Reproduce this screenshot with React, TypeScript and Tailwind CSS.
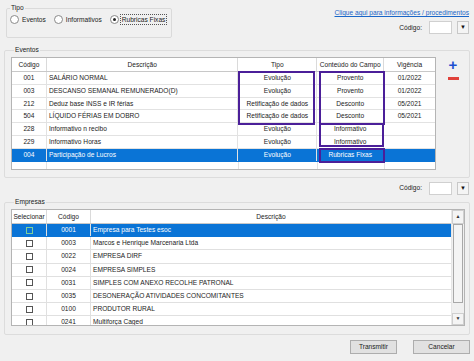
import React from "react";

const eventos = [
  { cod: "001", desc: "SALÁRIO NORMAL", tipo: "Evolução", cont: "Provento", vig: "01/2022" },
  { cod: "003", desc: "DESCANSO SEMANAL REMUNERADO(D)", tipo: "Evolução", cont: "Provento", vig: "01/2022" },
  { cod: "212", desc: "Deduz base INSS e IR férias", tipo: "Retificação de dados", cont: "Desconto", vig: "05/2021" },
  { cod: "504", desc: "LÍQUIDO FÉRIAS EM DOBRO", tipo: "Retificação de dados", cont: "Desconto", vig: "05/2021" },
  { cod: "228", desc: "Informativo n recibo", tipo: "Evolução", cont: "Informativo", vig: "" },
  { cod: "229", desc: "Informativo Horas", tipo: "Evolução", cont: "Informativo", vig: "" },
  { cod: "004", desc: "Participação de Lucros", tipo: "Evolução", cont: "Rubricas Fixas", vig: "", sel: true },
];

const empresas = [
  { cod: "0001", desc: "Empresa para Testes esoc", sel: true },
  { cod: "0003", desc: "Marcos e Henrique Marcenaria Ltda" },
  { cod: "0022", desc: "EMPRESA DIRF" },
  { cod: "0024", desc: "EMPRESA SIMPLES" },
  { cod: "0031", desc: "SIMPLES COM ANEXO RECOLHE PATRONAL" },
  { cod: "0035", desc: "DESONERAÇÃO ATIVIDADES CONCOMITANTES" },
  { cod: "0100", desc: "PRODUTOR RURAL" },
  { cod: "0241", desc: "Multiforça Caged" },
];

const Radio = ({ label, checked, focus }: { label: string; checked?: boolean; focus?: boolean }) => (
  <div className="flex items-center gap-[1px] whitespace-nowrap">
    <div className="w-[9px] h-[9px] rounded-full border border-[#8a8a8a] bg-white flex items-center justify-center">
      {checked && <div className="w-[3px] h-[3px] rounded-full bg-[#222]" />}
    </div>
    <span className={focus ? "border border-dotted border-[#555] px-[1px] leading-[9px]" : "px-[1px] leading-[9px] border border-transparent"}>
      {label}
    </span>
  </div>
);

const Combo = () => (
  <div className="flex items-center gap-[2px]">
    <span className="mr-[5px]">Código:</span>
    <div className="w-[23px] h-[13px] bg-white border border-[#d0d0d0]" />
    <div className="w-[12px] h-[13px] ml-[3px] bg-[#f4f4f4] border border-[#c8c8c8] flex items-center justify-center text-[6px] text-[#111]">
      ▼
    </div>
  </div>
);

const Box = ({ className }: { className: string }) => (
  <div className={"absolute border-2 border-[#4b1f99] pointer-events-none " + className} />
);

export default function App() {
  return (
    <div
      className="w-[474px] h-[361px] bg-[#f0f0f0] flex flex-col px-[4px] text-[6.6px] text-[#1b1b1b] overflow-hidden"
      style={{ fontFamily: '"Liberation Sans", Arial, sans-serif' }}
    >
      {/* topo */}
      <div className="h-[46px] flex">
        <fieldset className="ml-[2px] mt-[4px] w-[164px] h-[34px] border border-[#dadada] rounded-[2px] px-[4px]">
          <legend className="px-[1px] -ml-[1px] leading-[8px]">Tipo</legend>
          <div className="flex items-center gap-[6px] mt-[2px] -ml-[1px]">
            <Radio label="Eventos" />
            <Radio label="Informativos" />
            <Radio label="Rubricas Fixas" checked focus />
          </div>
        </fieldset>
        <div className="flex-1 flex flex-col items-end pr-[1px]">
          <a className="mt-[9px] text-[#1a66c8] underline leading-[8px]">Clique aqui para informações / procedimentos</a>
          <div className="mt-[4px]">
            <Combo />
          </div>
        </div>
      </div>

      {/* eventos */}
      <fieldset className="h-[132px] border border-[#dcdcdc] rounded-[2px] pl-[6px] pr-[6px]">
        <legend className="px-[1px] ml-[3px] leading-[8px]">Eventos</legend>
        <div className="flex mt-[3px]">
          <div className="relative w-[425px] h-[113px] bg-white border border-[#b4b4b4] overflow-hidden">
            <div className="flex h-[14px] border-b border-[#c8c8c8] items-center">
              <div className="w-[35px] text-center border-r border-[#dadada] h-full leading-[14px]">Código</div>
              <div className="w-[192px] text-center border-r border-[#dadada] h-full leading-[14px]">Descrição</div>
              <div className="w-[79px] text-center border-r border-[#dadada] h-full leading-[14px]">Tipo</div>
              <div className="w-[67px] text-center border-r border-[#dadada] h-full leading-[14px]">Conteúdo do Campo</div>
              <div className="w-[51px] text-center h-full leading-[14px]">Vigência</div>
            </div>
            {eventos.map((e) => (
              <div
                key={e.cod}
                className={
                  "flex h-[12.8px] leading-[12px] border-b " +
                  (e.sel ? "bg-[#0a74d6] text-white border-[#0a74d6]" : "border-[#e2e2e2]")
                }
              >
                <div className="w-[35px] text-center border-r border-[#e2e2e2]">{e.cod}</div>
                <div className="w-[192px] pl-[2px] border-r border-[#e2e2e2] whitespace-nowrap">{e.desc}</div>
                <div className="w-[79px] text-center border-r border-[#e2e2e2] whitespace-nowrap">{e.tipo}</div>
                <div className="w-[67px] text-center border-r border-[#e2e2e2] whitespace-nowrap">{e.cont}</div>
                <div className="w-[51px] text-center">{e.vig}</div>
              </div>
            ))}
            <div className="flex h-[12.8px]">
              <div className="w-[35px] border-r border-[#e2e2e2]" />
              <div className="w-[192px] border-r border-[#e2e2e2]" />
              <div className="w-[79px] border-r border-[#e2e2e2]" />
              <div className="w-[67px] border-r border-[#e2e2e2]" />
            </div>
            <Box className="left-[226px] top-[13px] w-[77px] h-[54px]" />
            <Box className="left-[307px] top-[13px] w-[66px] h-[54px]" />
            <Box className="left-[307px] top-[65px] w-[65px] h-[24px]" />
            <Box className="left-[307px] top-[90px] w-[66px] h-[15px]" />
          </div>
          <div className="flex flex-col items-center ml-[10px] mt-[1px] w-[14px]">
            <span className="text-[15px] font-bold leading-[13px] text-[#1b4fd0]">+</span>
            <div className="mt-[6px] w-[11px] h-[3px] bg-[#e0413a]" />
          </div>
        </div>
      </fieldset>

      {/* codigo */}
      <div className="h-[20px] flex items-center justify-end pr-[1px]">
        <Combo />
      </div>

      {/* empresas */}
      <fieldset className="h-[137px] border border-[#dcdcdc] rounded-[2px] pl-[6px] pr-[4px]">
        <legend className="px-[1px] ml-[3px] leading-[8px]">Empresas</legend>
        <div className="flex w-[454px] h-[117px] mt-[3px] bg-white border border-[#b4b4b4] overflow-hidden">
          <div className="flex-1">
            <div className="flex h-[14px] leading-[14px] border-b border-[#c8c8c8]">
              <div className="w-[35px] text-center border-r border-[#dadada]">Selecionar</div>
              <div className="w-[44px] text-center border-r border-[#dadada]">Código</div>
              <div className="flex-1 text-center">Descrição</div>
            </div>
            {empresas.map((e) => (
              <div
                key={e.cod}
                className={
                  "flex h-[13.2px] leading-[12.5px] border-b " +
                  (e.sel ? "bg-[#0a74d6] text-white border-[#0a74d6]" : "border-[#e0e0e0]")
                }
              >
                <div className="w-[35px] flex items-center justify-center border-r border-[#e0e0e0]">
                  <div
                    className={
                      "w-[7px] h-[7px] border " +
                      (e.sel ? "border-[#7fcf9a] bg-[#0a74d6]" : "border-[#555] bg-white")
                    }
                  />
                </div>
                <div className="w-[44px] text-center border-r border-[#e0e0e0]">{e.cod}</div>
                <div className="flex-1 pl-[2px] whitespace-nowrap">{e.desc}</div>
              </div>
            ))}
          </div>
          <div className="w-[13px] flex flex-col bg-[#f0f0f0] border-l border-[#e6e6e6]">
            <div className="h-[14px] flex items-center justify-center text-[5px] text-[#333] bg-[#f4f4f4] border border-[#cfcfcf]">▲</div>
            <div className="h-[79px] bg-[#f4f4f4] border border-[#a8a8a8] mx-[1px]" />
            <div className="flex-1" />
            <div className="h-[12px] flex items-center justify-center text-[5px] text-[#333] bg-[#f4f4f4] border border-[#cfcfcf]">▼</div>
          </div>
        </div>
      </fieldset>

      {/* botoes */}
      <div className="flex justify-end gap-[16px] mt-[5px] pr-[0px]">
        <button className="w-[47px] h-[14px] bg-[#e1e1e1] border border-[#adadad] text-[6.6px] leading-[12px]">Transmitir</button>
        <button className="w-[57px] h-[14px] bg-[#e1e1e1] border border-[#adadad] text-[6.6px] leading-[12px]">Cancelar</button>
      </div>
    </div>
  );
}
